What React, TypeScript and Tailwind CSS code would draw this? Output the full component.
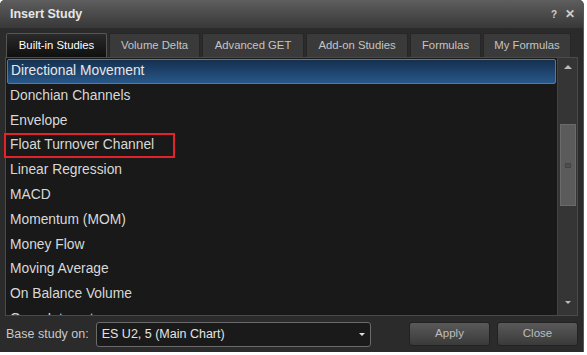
import React from 'react';

const tabs = [
    { name: 'Built-in Studies', w: 'w-[101px]', active: true },
    { name: 'Volume Delta', w: 'w-[91px]' },
    { name: 'Advanced GET', w: 'w-[102px]' },
    { name: 'Add-on Studies', w: 'w-[102px]' },
    { name: 'Formulas', w: 'w-[71px]' },
    { name: 'My Formulas', w: 'w-[88px]' },
];

const studies = [
    'Directional Movement',
    'Donchian Channels',
    'Envelope',
    'Float Turnover Channel',
    'Linear Regression',
    'MACD',
    'Momentum (MOM)',
    'Money Flow',
    'Moving Average',
    'On Balance Volume',
    'Open Interest',
];

export default function App() {
    return (
        <div className="w-[587px] h-[355px] bg-white font-['Liberation_Sans',Arial,sans-serif]">
            <div className="relative w-[584px] h-[352px] flex flex-col bg-[#2b2b2b] rounded-t-[5px] border-r border-[#555] overflow-hidden">
                {/* title bar */}
                <div className="h-[28px] flex items-center justify-between pl-[10px] pr-[8px] bg-gradient-to-b from-[#5e5e5e] to-[#383838]">
                    <span className="text-[12.5px] font-bold text-[#e6e6e6]">Insert Study</span>
                    <div className="flex items-center gap-[8px] text-[10px] font-bold text-[#cfcfcf]">
                        <span>?</span>
                        <span className="text-[12px]">✕</span>
                    </div>
                </div>

                {/* tabs */}
                <div className="flex gap-[2px] pl-[6px] mt-[5px] h-[24px]">
                    {tabs.map((t) => (
                        <div
                            key={t.name}
                            className={`${t.w} flex items-center justify-center text-[11.3px] rounded-t-[2px] border border-b-0 ${t.active
                                ? 'bg-gradient-to-b from-[#2a2a2a] to-[#101010] border-[#555] text-white'
                                : 'bg-[#3a3a3a] border-[#262626] text-[#c4c4c4]'}`}
                        >
                            {t.name}
                        </div>
                    ))}
                </div>

                {/* list + scrollbar */}
                <div className="mx-[5px] h-[259px] flex border border-[#4a4a4a] bg-[#191919]">
                    <div className="flex-1 overflow-hidden pt-[1px] px-[1px]">
                        {studies.map((s, i) => (
                            <div
                                key={s}
                                className={`h-[24.8px] flex items-center pl-[3px] text-[13.8px] text-[#d8d8d8] ${i === 0
                                    ? 'bg-gradient-to-b from-[#15304f] to-[#28588a] border border-[#3f7fba] rounded-[2px] text-[#e8e8e8]'
                                    : ''}`}
                            >
                                {s}
                            </div>
                        ))}
                    </div>
                    <div className="w-[20px] bg-[#353535] border-l border-[#444] flex flex-col items-center">
                        <div className="h-[18px] flex items-center justify-center">
                            <div className="w-0 h-0 border-l-[4px] border-r-[4px] border-b-[4px] border-transparent border-b-[#bbb]" />
                        </div>
                        <div className="mt-[48px] w-[16px] h-[82px] bg-[#5b5b5b] border border-[#6a6a6a] flex items-center justify-center">
                            <div className="w-[6px] h-[5px] border border-[#444] bg-[#4e4e4e]" />
                        </div>
                        <div className="flex-1" />
                        <div className="h-[14px] flex items-start justify-center">
                            <div className="w-0 h-0 border-l-[3px] border-r-[3px] border-t-[3px] border-transparent border-t-[#bbb]" />
                        </div>
                    </div>
                </div>

                {/* bottom bar */}
                <div className="flex-1 flex items-center pl-[6px] pr-[5px] gap-[6px]">
                    <span className="text-[12.5px] text-[#c8c8c8]">Base study on:</span>
                    <div className="ml-[1px] w-[275px] h-[25px] flex items-center justify-between pl-[5px] pr-[5px] bg-[#1a1a1a] border border-[#6a6a6a] rounded-[3px]">
                        <span className="text-[12.5px] text-[#e4e4e4]">ES U2, 5 (Main Chart)</span>
                        <div className="w-0 h-0 border-l-[3px] border-r-[3px] border-t-[3px] border-transparent border-t-[#ddd]" />
                    </div>
                    <div className="flex-1" />
                    <div className="w-[81px] h-[24px] flex items-center justify-center text-[11.5px] text-[#bdbdbd] rounded-[3px] border border-[#222] bg-gradient-to-b from-[#5a5a5a] to-[#3a3a3a]">
                        Apply
                    </div>
                    <div className="ml-[1px] w-[81px] h-[24px] flex items-center justify-center text-[11.5px] text-[#bdbdbd] rounded-[3px] border border-[#222] bg-gradient-to-b from-[#5a5a5a] to-[#3a3a3a]">
                        Close
                    </div>
                </div>

                {/* annotation */}
                <div className="absolute left-[4px] top-[133px] w-[171px] h-[25px] border-2 border-[#e3232b]" />
            </div>
        </div>
    );
}
